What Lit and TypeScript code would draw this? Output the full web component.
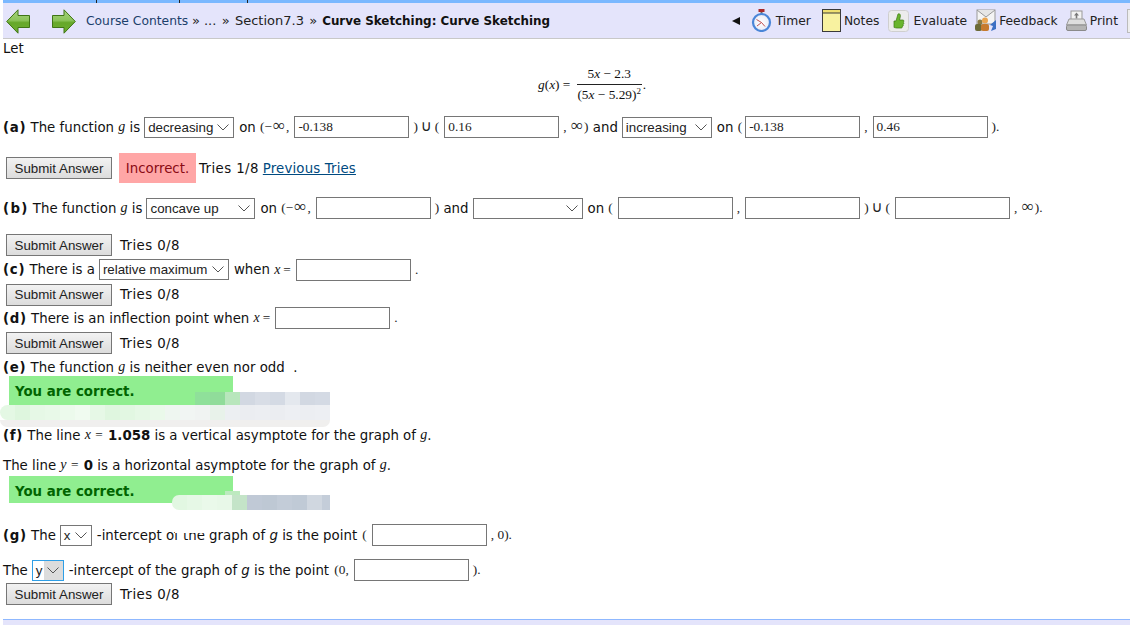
import { LitElement, html, css, svg } from "lit";
import { customElement } from "lit/decorators.js";

const timerIcon = svg`<svg class="ic" width="21" height="23" viewBox="0 0 21 23"><defs><radialGradient id="tf"><stop offset="0" stop-color="#fff"/><stop offset=".8" stop-color="#eef0f8"/><stop offset="1" stop-color="#c8d4ee"/></radialGradient></defs><rect x="7.500" y="0" width="6" height="3" fill="#a82a2a"/><rect x="9.500" y="3" width="2" height="2" fill="#666"/><circle cx="10.500" cy="13.500" r="8.500" fill="url(#tf)" stroke="#4a86d8" stroke-width="2.200"/><path d="M10.500 13.500L5.500 10.500M10.500 13.500L14 17.500M10.500 13.500L6 17" stroke="#c05050" stroke-width="1"/></svg>`;
const notesIcon = svg`<svg class="ic" width="19" height="23" viewBox="0 0 19 23"><rect x=".5" y=".5" width="18" height="22" fill="#f8f2a0" stroke="#3a3a3a"/><rect x=".5" y=".5" width="18" height="3.500" fill="#efe070" stroke="#3a3a3a"/></svg>`;
const evalIcon = svg`<svg class="ic" width="21" height="22" viewBox="0 0 21 22"><rect x=".5" y=".5" width="20" height="21" rx="3" fill="#ececec" stroke="#cfcfcf"/><path d="M6 11h2l2-7c2-1 3 1 2 4l-.5 2H15c1.200 0 1.200 2 .2 2.200 1 .5.800 2-.2 2.200.6.800.2 2-.7 2 .2 1-.3 1.600-1.300 1.600H9c-1.500 0-2-.5-3-.5z" fill="#69b52c" stroke="#3d7a12" stroke-width=".7"/></svg>`;
const fbIcon = svg`<svg class="ic" width="22" height="23" viewBox="0 0 22 23"><rect x="3" y="1" width="18" height="14" fill="#f4f4f4" stroke="#999"/><path d="M3 1l9 7 9-7" fill="#e6e6e6" stroke="#999"/><circle cx="6" cy="13" r="2.500" fill="#8a7a44"/><rect x="1" y="15" width="7" height="7" rx="2" fill="#6c6a38"/><circle cx="11" cy="11.500" r="3" fill="#eaa550"/><rect x="7" y="15" width="8" height="7" rx="2" fill="#c67a2e"/><path d="M22 11l-6 5 3 1-2 5 5-2z" fill="#3b70c4"/></svg>`;
const printIcon = svg`<svg class="ic" width="21" height="22" viewBox="0 0 21 22"><rect x="5" y="1" width="11" height="10" fill="#f2f2f2" stroke="#999"/><path d="M10.500 2.500l-2.500 3h1.700v3h1.600v-3h1.700z" fill="#777"/><path d="M3 9h15l2.500 6H.5z" fill="#dedede" stroke="#999"/><rect x=".5" y="15" width="20" height="5.500" rx="1.500" fill="#b4b4b4" stroke="#8a8a8a"/></svg>`;

const arrow = (flip: boolean) => svg`<svg class="${flip ? "fl" : ""}" width="24" height="25" viewBox="0 0 24 25"><defs><linearGradient id="g${flip ? 1 : 0}" x1="0" y1="0" x2="0" y2="1"><stop offset="0" stop-color="#a6d27c"/><stop offset=".45" stop-color="#8cc45a"/><stop offset=".55" stop-color="#66a82a"/><stop offset="1" stop-color="#6cae30"/></linearGradient></defs><path d="M.5 6.500h11.500V.8l11.300 11.700L12 24.200v-5.700H.5z" fill="url(#g${flip ? 1 : 0})" stroke="#3f7516"/></svg>`;

const m = (s: string) => html`<i class="mv">${s}</i>`;
const sg = (s: string) => html`<i class="sg">${s}</i>`;
const sel = (t: string, w: number, cls = "") => html`<span class="sel ${cls}" style="width:${w}px"><span>${t}</span><span class="ar"><svg width="12" height="7" viewBox="0 0 12 7"><path d="M.5.500L6 6L11.500.500" fill="none" stroke="#555"/></svg></span></span>`;
const inp = (v = "") => html`<span class="inp">${v}</span>`;
const inf = html`<span class="inf">∞</span>`;
const cup = html`<span class="cup">∪</span>`;
const submit = (cls: string) => html`<div class="row sub ${cls}"><span class="btn">Submit Answer</span><span class="tries">Tries 0/8</span></div>`;

const band = (colors: string[]) => colors.map((c) => html`<b style="background:${c}"></b>`);
const smear1 = ["#e4f8e4","#def6de","#e6f8e6","#e8f9e8","#ecfaec","#f0fbf0","#e6f8e6","#dff6df","#e2f7e2","#e6f8e6","#eaf9ea","#eef6f0","#f1f5f3","#f0f3f2","#e8f2ea","#eceff2","#ebedf1","#eceef2","#ebedf1","#edeff3","#eceef2","#edeff3"];
const smearTop = ["#8fe09a","#90dc9a","#b8e6bc","#d2d8e2","#d8dde6","#d4dae4","#e4e8ee","#d2d8e2","#d4dae4"];
const smear2 = ["#e2f7e2","#e6f8e6","#eaf9ea","#e8f8e8","#c4e4c8","#c0c9d6","#bec8d4","#c3ccd8","#c0cad6","#d0d7e0","#c4cdd9"];

@customElement("app-root")
export class AppRoot extends LitElement {
  static styles = css`
    :host { display: block; width: 1130px; height: 625px; overflow: hidden; background: #fff; font: 13.33px "DejaVu Sans", Verdana, sans-serif; color: #111; position: relative; }
    .top { height: 3px; margin-left: 3px; background: #7ab8ff; display: flex; }
    .top u { width: 1px; background: #222; }
    .top u:nth-child(1) { margin-left: 93px; }
    .top u:nth-child(2) { margin-left: 82px; }
    .top u:nth-child(3) { margin-left: 67px; }
    .nav { height: 35px; margin-left: 3px; background: #e4e4fb; border-bottom: 1px solid #c8c8c8; display: flex; align-items: center; white-space: nowrap; font-size: 12.3px; }
    .arrows { display: flex; gap: 22px; margin: 2px 10px 0 3px; }
    .fl { transform: scaleX(-1); }
    .crumb { color: #1c3f6b; }
    .crumb .d { color: #222; font-size: 13px; word-spacing: 1.2px; }
    .crumb b { color: #111; font-size: 11.9px; margin-left: 1px; }
    .tools { margin-left: auto; display: flex; align-items: center; color: #222; }
    .tool { display: flex; align-items: center; gap: 4px; margin-right: 9px; }
    .tool.timer { margin-right: 11px; }
    .tool.notes { gap: 3px; }
    .tool.evaluate { margin-right: 7px; }
    .tool.feedback { gap: 3px; margin-right: 8px; }
    .tool.print { gap: 3px; }
    .tri { width: 0; height: 0; border: 4.500px solid transparent; border-right: 8px solid #111; border-left: 0; margin-right: 11px; }
    .ic { display: block; }
    .clip { width: 2px; height: 22px; background: #eee; border: 1px solid #bbb; border-right: 0; }
    .content { padding-left: 3px; }
    .row { display: flex; align-items: center; white-space: pre; height: 24px; }
    .row > b:first-child { letter-spacing: .7px; }
    .row.rb > b:first-child { letter-spacing: 1.3px; }
    .mv { font: italic 14px "Liberation Serif", serif; }
    .sg { font-style: italic; }
    .ms { font: 13.33px "Liberation Serif", serif; color: #222; }
    .eq { font: 13.33px "Liberation Serif", serif; color: #222; margin: 0 0 0 3px; }
    .wq { letter-spacing: 1px; }
    .tight { margin-right: -2px; }
    .pt { margin-left: 1px; }
    .pz { margin-left: 1px; }
    .inf { font-size: 17px; line-height: 0; margin: 0 1px; }
    .cup { font: 15px/0 "DejaVu Sans", sans-serif; margin: 0 3px; }
    .sel { box-sizing: border-box; height: 21px; border: 1px solid #767676; display: inline-flex; align-items: stretch; justify-content: space-between; padding-left: 3px; font: 13.33px "Liberation Sans", Arial, sans-serif; background: #fff; color: #222; margin: 0 5px 0 4px; }
    .sel > span { display: inline-flex; align-items: center; }
    .ar { padding: 0 4px 0 3px; }
    .sel.focus { border-color: #2f9fe6; }
    .sel.focus .ar { background: #dcdcdc; }
    .inp { box-sizing: border-box; width: 115px; height: 22px; border: 1px solid #767676; display: inline-flex; align-items: center; padding-left: 3px; font: 13.33px "Liberation Serif", serif; background: #fff; color: #222; margin: 0 4px 0 5px; }
    .sub { padding-left: 3px; }
    .btn { box-sizing: border-box; width: 106px; height: 22px; border: 1px solid #767676; background: linear-gradient(#f2f2f2, #dcdcdc); display: inline-flex; align-items: center; justify-content: center; font: 13.33px "Liberation Sans", Arial, sans-serif; color: #222; }
    .tries, .tr { letter-spacing: .4px; }
    .tries { margin-left: 8px; }
    .bad { background: #ffa6a6; color: #8a0a14; height: 30px; width: 77px; display: inline-flex; align-items: center; justify-content: center; margin: 0 3px 0 7px; }
    a { color: #004a80; text-decoration: underline; letter-spacing: .15px; margin-left: 4px; }
    .let { height: 19px; }
    .frac-row { height: 43px; margin-top: 5px; padding-left: 535px; font: 13.33px "Liberation Serif", serif; }
    .frac { display: inline-flex; flex-direction: column; align-items: center; margin: 0 1px 0 3px; }
    .frac .n { padding: 0 3px 2px; border-bottom: 1px solid #222; width: 65px; text-align: center; box-sizing: border-box; }
    .frac .dn { padding-top: 2px; }
    .frac sup { font-size: 9px; line-height: 0; }
    .ra { margin-top: 9px; }
    .rsub { height: 30px; margin-top: 14px; padding-left: 3px; }
    .rb { margin-top: 13px; }
    .s14 { margin-top: 13px; }
    .s1 { margin-top: 1px; height: 23px; }
    .rc { height: 25px; }
    .s3 { margin-top: 1px; }
    .ok { box-sizing: border-box; width: 224px; margin-left: 6px; background: #90ee90; color: #006400; font-weight: bold; padding-left: 6px; }
    .okwrap { position: relative; height: 47px; margin-top: -3px; }
    .okwrap.two { margin-top: -1px; }
    .ok1 { height: 44px; padding-top: 8px; }
    .ok2 { height: 27px; padding-top: 8px; }
    .smear, .topband { position: absolute; display: flex; }
    .smear b, .topband b { flex: none; width: 15px; height: 100%; display: block; }
    .topband { left: 192px; top: 16px; height: 13px; width: 135px; }
    .sm1 { left: -3px; top: 29px; height: 15px; width: 330px; border-radius: 8px 0 0 8px; overflow: hidden; }
    .sm1b { position: absolute; left: -3px; top: 44px; height: 7px; width: 330px; background: #f0efee; border-radius: 0 0 30px 30px; }
    .sm2 { left: 169px; top: 19px; height: 15px; width: 158px; border-radius: 7px 0 0 7px; overflow: hidden; }
    .sm2t { position: absolute; left: 222px; top: 15px; height: 4px; width: 15px; background: #bdeabf; }
    .rl { margin-top: 6px; }
    .rg { position: relative; }
    .erase { position: absolute; left: 172px; top: 0; width: 36px; height: 10px; background: #fff; }
    .rh { margin-top: 11px; }
    .foot { position: absolute; left: 3px; right: 0; top: 619px; height: 6px; background: #e4e4fb; border-top: 1px solid #8fb8ff; box-sizing: border-box; }
  `;

  render() {
    return html`
      <div class="top"><u></u><u></u><u></u></div>
      <div class="nav">
        <div class="arrows">${arrow(true)}${arrow(false)}</div>
        <div class="crumb">Course Contents <span class="d">»</span> <span class="d">... » Section7.3 »</span> <b>Curve Sketching: Curve Sketching</b></div>
        <div class="tools">
          <span class="tri"></span>
          <span class="tool timer">${timerIcon}Timer</span>
          <span class="tool notes">${notesIcon}Notes</span>
          <span class="tool evaluate">${evalIcon}Evaluate</span>
          <span class="tool feedback">${fbIcon}Feedback</span>
          <span class="tool print">${printIcon}Print</span>
          <span class="clip"></span>
        </div>
      </div>
      <div class="content">
        <div class="row let">Let</div>
        <div class="row frac-row"><i>g</i>(<i>x</i>) = <span class="frac"><span class="n">5<i>x</i> − 2.3</span><span class="dn">(5<i>x</i> − 5.29)<sup>2</sup></span></span>.</div>
        <div class="row ra"><b>(a)</b> The function ${m("g")} is${sel("decreasing", 90)}on <span class="ms">(−${inf},</span>${inp("-0.138")}<span class="ms">)${cup}(</span>${inp("0.16")}<span class="ms">, ${inf})</span> and${sel("increasing", 90)}on <span class="ms tight">(</span>${inp("-0.138")}<span class="ms">,</span>${inp("0.46")}<span class="ms">).</span></div>
        <div class="row rsub"><span class="btn">Submit Answer</span><span class="bad">Incorrect.</span><span class="tr">Tries 1/8</span><a>Previous Tries</a></div>
        <div class="row rb"><b>(b)</b> The function ${m("g")} is${sel("concave up", 109)}on <span class="ms">(−${inf},</span>${inp()}<span class="ms">)</span> and${sel("", 110)}on <span class="ms">(</span>${inp()}<span class="ms">,</span>${inp()}<span class="ms">)${cup}(</span>${inp()}<span class="ms">, ${inf}).</span></div>
        ${submit("s14")}
        <div class="row rc"><b>(c)</b> There is a${sel("relative maximum", 130)}when ${m("x")}<span class="eq">=</span>${inp()}<span class="ms">.</span></div>
        ${submit("s1")}
        <div class="row"><b>(d)</b> There is an inflection point when ${m("x")}<span class="eq">=</span>${inp()}<span class="ms">.</span></div>
        ${submit("s3")}
        <div class="row"><b>(e)</b> The function ${m("g")} is neither even nor odd  .</div>
        <div class="okwrap">
          <div class="ok ok1">You are correct.</div>
          <div class="topband">${band(smearTop)}</div>
          <div class="smear sm1">${band(smear1)}</div>
          <div class="sm1b"></div>
        </div>
        <div class="row"><b>(f)</b> The line ${m("x")}<span class="ms wq"> = </span><b>1.058</b> is a vertical asymptote for the graph of ${m("g")}.</div>
        <div class="row rl">The line ${m("y")}<span class="ms wq"> = </span><b>0</b> is a horizontal asymptote for the graph of ${m("g")}.</div>
        <div class="okwrap two">
          <div class="ok ok2">You are correct.</div>
          <div class="sm2t"></div>
          <div class="smear sm2">${band(smear2)}</div>
        </div>
        <div class="row rg"><b>(g)</b> The${sel("x", 32)}-intercept of the graph of ${sg("g")} is the point <span class="ms pt">(</span>${inp()}<span class="ms">, 0).</span><span class="erase"></span></div>
        <div class="row rh">The${sel("y", 32, "focus")}-intercept of the graph of ${sg("g")} is the point <span class="ms pz">(0,</span>${inp()}<span class="ms">).</span></div>
        ${submit("")}
      </div>
      <div class="foot"></div>
    `;
  }
}
